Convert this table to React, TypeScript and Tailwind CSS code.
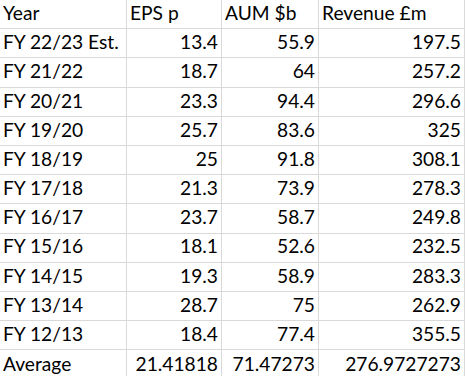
const rows: [string, string, string, string][] = [
  ["FY 22/23 Est.", "13.4", "55.9", "197.5"],
  ["FY 21/22", "18.7", "64", "257.2"],
  ["FY 20/21", "23.3", "94.4", "296.6"],
  ["FY 19/20", "25.7", "83.6", "325"],
  ["FY 18/19", "25", "91.8", "308.1"],
  ["FY 17/18", "21.3", "73.9", "278.3"],
  ["FY 16/17", "23.7", "58.7", "249.8"],
  ["FY 15/16", "18.1", "52.6", "232.5"],
  ["FY 14/15", "19.3", "58.9", "283.3"],
  ["FY 13/14", "28.7", "75", "262.9"],
  ["FY 12/13", "18.4", "77.4", "355.5"],
  ["Average", "21.41818", "71.47273", "276.9727273"],
];

const header = ["Year", "EPS p", "AUM $b", "Revenue £m"];

export default function App() {
  return (
    <div className="w-[466px] h-[376px] overflow-hidden bg-white text-black font-['Lato',_'Liberation_Sans',_sans-serif] text-[19.2px] leading-none">
      <div className="grid grid-cols-[127px_95px_97px_146px]">
        {header.map((h) => (
          <div
            key={h}
            className="h-[29.2px] flex items-end pb-[6px] pl-[3px] border-r border-b border-[#d9d9d9]"
          >
            {h}
          </div>
        ))}
        {rows.map((r, i) =>
          r.map((cell, j) => (
            <div
              key={`${i}-${j}`}
              className={
                "h-[29.2px] flex items-end pb-[6px] border-r border-[#d9d9d9] " +
                (i < rows.length - 1 ? "border-b " : "") +
                (j === 0 ? "pl-[3px]" : "justify-end pr-[3px]")
              }
            >
              {cell}
            </div>
          ))
        )}
      </div>
    </div>
  );
}
